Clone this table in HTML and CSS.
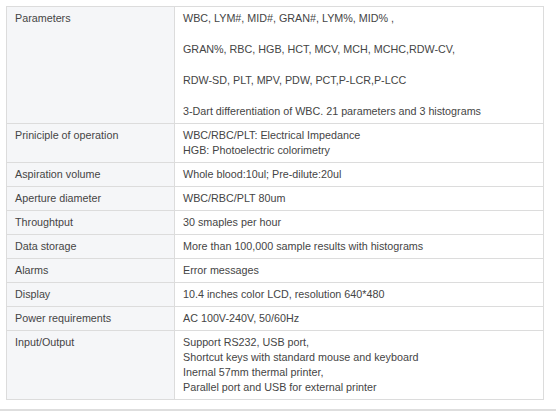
FILE: index.html
```html
<!DOCTYPE html>
<html>
<head>
<meta charset="utf-8">
<link rel="stylesheet" href="styles.css">
</head>
<body>
<div class="wrap">
<table class="spec">
  <tr>
    <td class="k">Parameters</td>
    <td class="v">
      <p>WBC, LYM#, MID#, GRAN#, LYM%, MID% ,</p>
      <p>GRAN%, RBC, HGB, HCT, MCV, MCH, MCHC,RDW-CV,</p>
      <p>RDW-SD, PLT, MPV, PDW, PCT,P-LCR,P-LCC</p>
      <p>3-Dart differentiation of WBC. 21 parameters and 3 histograms</p>
    </td>
  </tr>
  <tr>
    <td class="k">Priniciple of operation</td>
    <td class="v">WBC/RBC/PLT: Electrical Impedance<br>HGB: Photoelectric colorimetry</td>
  </tr>
  <tr><td class="k">Aspiration volume</td><td class="v">Whole blood:10ul; Pre-dilute:20ul</td></tr>
  <tr><td class="k">Aperture diameter</td><td class="v">WBC/RBC/PLT 80um</td></tr>
  <tr><td class="k">Throughtput</td><td class="v">30 smaples per hour</td></tr>
  <tr><td class="k">Data storage</td><td class="v">More than 100,000 sample results with histograms</td></tr>
  <tr><td class="k">Alarms</td><td class="v">Error messages</td></tr>
  <tr><td class="k">Display</td><td class="v">10.4 inches color LCD, resolution 640*480</td></tr>
  <tr><td class="k">Power requirements</td><td class="v">AC 100V-240V, 50/60Hz</td></tr>
  <tr>
    <td class="k">Input/Output</td>
    <td class="v">Support RS232, USB port,<br>Shortcut keys with standard mouse and keyboard<br>Inernal 57mm thermal printer,<br>Parallel port and USB for external printer</td>
  </tr>
</table>
<div class="rule"></div>
</div>
</body>
</html>
```
FILE: styles.css
```css
html, body {
  margin: 0;
  padding: 0;
  background: #fff;
}
.wrap {
  padding: 6px 0 0 0;
}
.spec {
  margin-left: 6px;
  width: 538px;
  border-collapse: collapse;
  font-family: "Liberation Sans", Arial, sans-serif;
  font-size: 10.75px;
  line-height: 15px;
  color: #454545;
}
.spec td {
  border: 1px solid #dcdcdc;
  padding: 4px 8px;
  vertical-align: top;
  text-align: left;
}
.spec td.k {
  width: 151px;
  background: #f5f6f8;
}
.spec td.v {
  background: #fff;
}
.spec p {
  margin: 0 0 16px 0;
}
.spec p:last-child {
  margin-bottom: 0;
}
.rule {
  margin-top: 9px;
  width: 556px;
  height: 2px;
  background: #dedede;
}
```
